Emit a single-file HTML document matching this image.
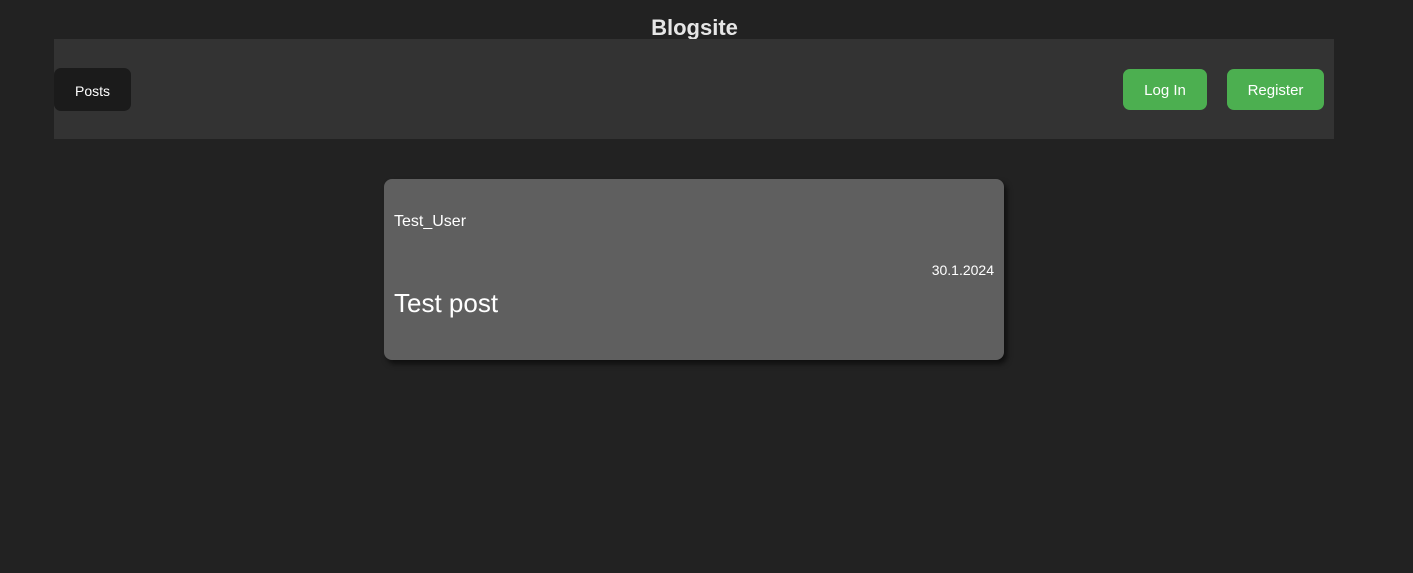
<!DOCTYPE html>
<html><head><style>
body{margin:0;background:#222;width:1413px;height:573px;position:relative;font-family:"Liberation Sans",sans-serif;overflow:hidden}
.t{position:absolute;left:0;width:1389px;top:15px;text-align:center;color:#e6e6e6;font-weight:bold;font-size:22px;line-height:26px}
.nav{position:absolute;left:54px;top:39px;width:1280px;height:100px;background:#333}
.b{position:absolute;border-radius:7px;color:#fff;font-size:15px;display:flex;align-items:center;justify-content:center;padding-top:2px;box-sizing:border-box}
.card{position:absolute;left:384px;top:179px;width:620px;height:181px;background:#5f5f5f;border-radius:8px;box-shadow:3px 4px 6px rgba(0,0,0,.6);color:#fff}
</style></head><body>
<div class="t">Blogsite</div>
<div class="nav">
<div class="b" style="left:0;top:29px;width:77px;height:43px;background:#1b1b1b;font-size:14px">Posts</div>
<div class="b" style="left:1069px;top:30px;width:84px;height:41px;background:#4caf50">Log In</div>
<div class="b" style="left:1173px;top:30px;width:97px;height:41px;background:#4caf50">Register</div>
</div>
<div class="card">
<div style="position:absolute;left:10px;top:34px;font-size:16px">Test_User</div>
<div style="position:absolute;right:10px;top:83px;font-size:14px">30.1.2024</div>
<div style="position:absolute;left:10px;top:109px;font-size:26px">Test post</div>
</div>
</body></html>
